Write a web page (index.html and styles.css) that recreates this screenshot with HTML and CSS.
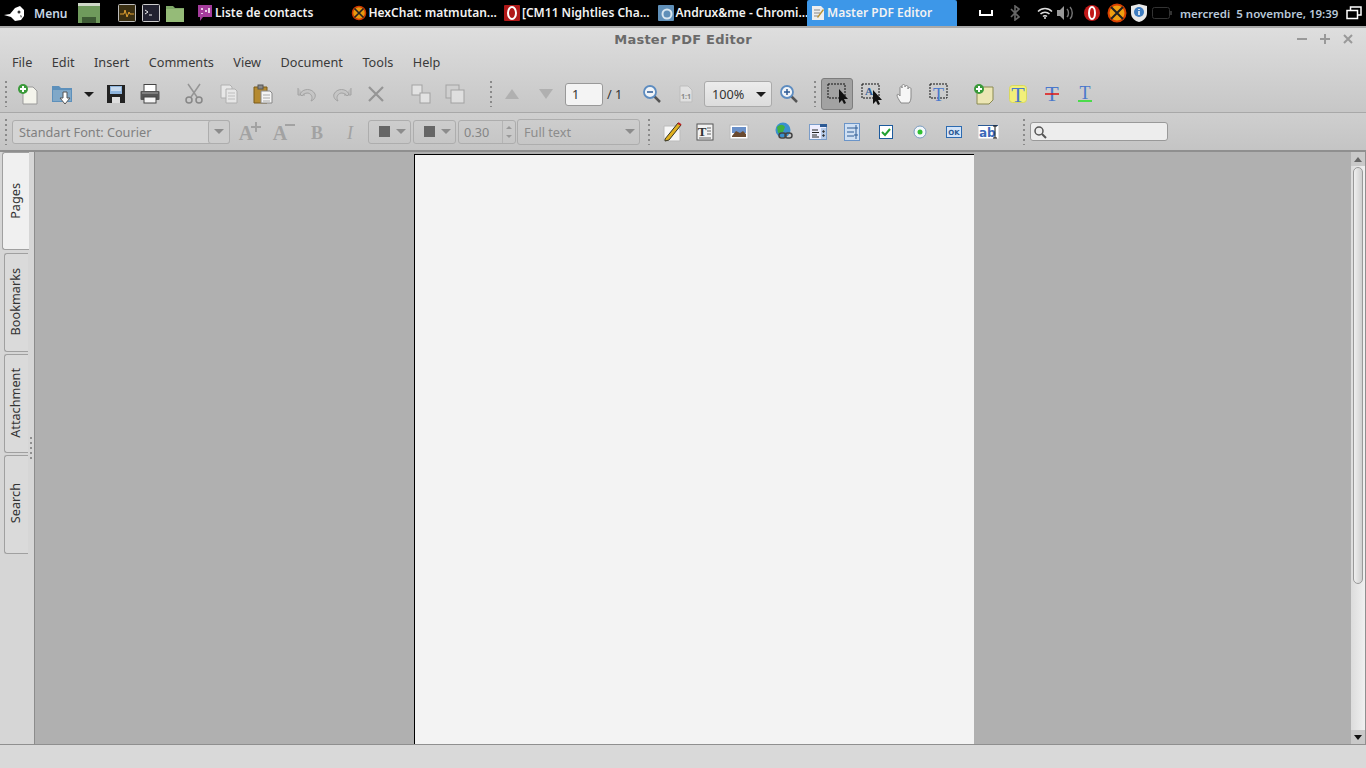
FILE: index.html
```html
<!DOCTYPE html>
<html lang="fr">
<head>
    <meta charset="UTF-8">
    <title>Master PDF Editor</title>
    <link rel="stylesheet" href="styles.css">
</head>
<body>
    <!-- desktop panel -->
    <div class="panel">
        <svg class="logo" width="24" height="22" viewBox="0 0 24 22"><path d="M2 13l6-1 5-6 5-2 4 4 0 6-3 4-6 1-4-4-7-2z" fill="#fff"/><circle cx="17" cy="10" r="1.5" fill="#333"/><path d="M18 13l2 1-1 2z" fill="#555"/></svg>
        <span class="menu-btn">Menu</span>
        <div class="launchers">
            <svg class="l-desk" width="22" height="20" viewBox="0 0 22 20"><rect width="22" height="3" fill="#cfd8c8"/><rect y="3" width="22" height="17" fill="#6f9a5c"/><rect x="4" y="14" width="14" height="6" fill="#3d5a34"/></svg>
            <svg class="l-mon" width="18" height="18" viewBox="0 0 18 18"><rect x=".5" y=".5" width="17" height="17" rx="1" fill="#3a2f12" stroke="#bbb"/><path d="M2 10h4l1-4 2 7 2-5 1 2h4" fill="none" stroke="#e0a030"/></svg>
            <svg class="l-term" width="18" height="18" viewBox="0 0 18 18"><rect x=".5" y=".5" width="17" height="17" rx="1" fill="#222230" stroke="#ccc"/><path d="M3 6l3 2-3 2M7 11h3" fill="none" stroke="#eee"/></svg>
            <svg class="l-fold" width="20" height="18" viewBox="0 0 20 18"><path d="M1 2h7l2 2h9v14H1z" fill="#7fa868"/><path d="M1 5h18v13H1z" fill="#95bb78"/></svg>
        </div>
        <div class="tasks">
            <div class="task">
                <svg width="16" height="18" viewBox="0 0 16 18"><path d="M1 1h14v12H6l-3 4v-4H1z" fill="#a43c9c"/><path d="M5 4v2M5 9v1M8 7h2M12 4v5" stroke="#fff" stroke-width="1.5"/></svg>
                <span>Liste de contacts</span>
            </div>
            <div class="task">
                <svg width="16" height="16" viewBox="0 0 16 16"><circle cx="8" cy="8" r="6.5" fill="#e89a10" stroke="#d03a00" stroke-width="1.5"/><path d="M3.5 3.5l9 9M12.5 3.5l-9 9" stroke="#222" stroke-width="1.6"/></svg>
                <span>HexChat: matmutan...</span>
            </div>
            <div class="task">
                <svg width="16" height="16" viewBox="0 0 16 16"><rect width="16" height="16" rx="1" fill="#b01818"/><ellipse cx="8" cy="8" rx="4" ry="6" fill="none" stroke="#fff" stroke-width="2"/></svg>
                <span>[CM11 Nightlies Cha...</span>
            </div>
            <div class="task">
                <svg width="16" height="16" viewBox="0 0 16 16"><rect width="16" height="16" rx="1" fill="#5f8fb8"/><circle cx="9" cy="9" r="4.5" fill="none" stroke="#d8e6f0" stroke-width="2"/></svg>
                <span>Andrux&amp;me - Chromi...</span>
            </div>
            <div class="task task-active">
                <svg width="14" height="16" viewBox="0 0 14 16"><path d="M1 1h9l3 3v11H1z" fill="#eee"/><path d="M3 5h6M3 8h6M3 11h4" stroke="#888"/><path d="M6 12l6-8 1 1-6 8z" fill="#b89030"/></svg>
                <span>Master PDF Editor</span>
            </div>
        </div>
        <div class="tray">
            <svg class="t-space" width="14" height="8" viewBox="0 0 14 8"><path d="M1 1v5h12V1" fill="none" stroke="#fff" stroke-width="2"/></svg>
            <svg class="t-bt" width="10" height="16" viewBox="0 0 10 16"><path d="M1 4l8 8-4 3V1l4 3-8 8" fill="none" stroke="#666" stroke-width="1.6"/></svg>
            <svg class="t-wifi" width="16" height="12" viewBox="0 0 16 12"><path d="M1 4.500c4-4 10-4 14 0M3.500 7c2.500-2.500 6.500-2.500 9 0M6 9.500c1-1 3-1 4 0" fill="none" stroke="#ddd" stroke-width="1.5"/><circle cx="8" cy="11" r="1" fill="#ddd"/></svg>
            <svg class="t-vol" width="16" height="14" viewBox="0 0 16 14"><path d="M0 4h3l4-4v14l-4-4H0z" fill="#999"/><path d="M10 3c2 2 2 6 0 8M13 1c3 3 3 9 0 12" fill="none" stroke="#777" stroke-width="1.4"/></svg>
            <svg class="t-op" width="16" height="16" viewBox="0 0 16 16"><circle cx="8" cy="8" r="8" fill="#c01818"/><ellipse cx="8" cy="8" rx="3" ry="6" fill="none" stroke="#fff" stroke-width="2"/></svg>
            <svg class="t-hex" width="20" height="20" viewBox="0 0 20 20"><circle cx="10" cy="10" r="8.500" fill="#f0a010" stroke="#d84000" stroke-width="2"/><path d="M4 4l12 12M16 4L4 16" stroke="#222" stroke-width="2"/></svg>
            <svg class="t-shield" width="18" height="20" viewBox="0 0 18 20"><path d="M9 1l8 2v7c0 5-4 8-8 9-4-1-8-4-8-9V3z" fill="#e8e8e8"/><circle cx="9" cy="9" r="5" fill="#3e7cc0"/><path d="M9 6v1M9 8v4" stroke="#fff" stroke-width="1.5"/></svg>
            <svg class="t-batt" width="20" height="12" viewBox="0 0 20 12"><rect x=".5" y=".5" width="17" height="11" rx="2" fill="none" stroke="#333"/><rect x="18" y="4" width="2" height="4" fill="#333"/></svg>
            <span class="clock">mercredi&nbsp; 5 novembre, 19:39</span>
            <svg class="t-win" width="16" height="14" viewBox="0 0 16 14"><rect x="4.500" y="1" width="10.500" height="8" fill="none" stroke="#fff" stroke-width="1.500"/><rect x="1" y="4.500" width="10.500" height="8" fill="#000" stroke="#fff" stroke-width="1.500"/></svg>
        </div>
    </div>

    <div class="window">
        <div class="titlebar">
            <span class="title">Master PDF Editor</span>
            <div class="win-btns">
                <svg width="10" height="10" viewBox="0 0 10 10"><path d="M0 5h10" stroke="#999" stroke-width="2"/></svg>
                <svg width="10" height="10" viewBox="0 0 10 10"><path d="M0 5h10M5 0v10" stroke="#999" stroke-width="2"/></svg>
                <svg width="10" height="10" viewBox="0 0 10 10"><path d="M1 1l8 8M9 1l-8 8" stroke="#999" stroke-width="2"/></svg>
            </div>
        </div>

        <div class="menubar">
            <span>File</span><span>Edit</span><span>Insert</span><span>Comments</span><span>View</span><span>Document</span><span>Tools</span><span>Help</span>
        </div>

        <div class="toolbar tb1">
            <i class="grip"></i>
            <div class="tool"><svg width="24" height="24" viewBox="0 0 24 24"><path d="M7 5h10l4 4v13H7z" fill="#f4f4ec" stroke="#999"/><circle cx="7" cy="7" r="5" fill="#3a9a3a"/><path d="M7 4v6M4 7h6" stroke="#fff" stroke-width="2"/></svg></div>
            <div class="tool"><svg width="24" height="24" viewBox="0 0 24 24"><path d="M2 6V4h7l2 2h11v14H2z" fill="#5d90bb"/><path d="M3 8h18v11H3z" fill="#80a8c8"/><path d="M13 10h4v6h3l-5 6-5-6h3z" fill="#fff" stroke="#555"/></svg></div>
            <div class="tool tool-arrow"><i class="caret"></i></div>
            <div class="tool"><svg width="20" height="20" viewBox="0 0 20 20"><path d="M1 1h18v18H1z" fill="#222"/><rect x="4" y="2" width="12" height="8" fill="#8eb4dc"/><path d="M5 4h10M5 6h10" stroke="#fff"/><rect x="6" y="13" width="8" height="6" fill="#ddd"/></svg></div>
            <div class="tool"><svg width="22" height="22" viewBox="0 0 22 22"><rect x="5" y="1.500" width="12" height="7" fill="#fff" stroke="#444"/><rect x="1.500" y="8" width="19" height="9" rx="1" fill="#555"/><rect x="5" y="14" width="12" height="6" fill="#f4f4f4" stroke="#444"/><path d="M3 10h16" stroke="#aaa"/></svg></div>

            <div class="tool gap10 off"><svg width="20" height="22" viewBox="0 0 20 22"><path d="M4 1l9 13M16 1L7 14" stroke="#888" stroke-width="1.500"/><circle cx="5" cy="17" r="3" fill="none" stroke="#777" stroke-width="1.500"/><circle cx="15" cy="17" r="3" fill="none" stroke="#777" stroke-width="1.500"/></svg></div>
            <div class="tool gap1 off"><svg width="20" height="20" viewBox="0 0 20 20"><path d="M2 1h9l2 2v11H2z" fill="#eee" stroke="#aaa"/><path d="M7 5h9l2 2v12H7z" fill="#eee" stroke="#aaa"/><path d="M9 9h7M9 12h7M9 15h7" stroke="#bbb"/></svg></div>
            <div class="tool"><svg width="20" height="20" viewBox="0 0 20 20"><path d="M1 3h13v16H1z" fill="#b58a30" stroke="#7a5a18"/><rect x="5" y="1" width="5" height="4" fill="#888" stroke="#555"/><path d="M8 7h9l2 2v10H8z" fill="#f4f4f4" stroke="#888"/><path d="M10 11h7M10 14h7M10 17h7" stroke="#aaa"/></svg></div>

            <div class="tool gap10 off"><svg width="20" height="16" viewBox="0 0 20 16"><path d="M1 2v7h7" fill="#bbb" stroke="#999"/><path d="M3 8c3-6 12-6 15 0 1 3-1 6-4 7 2-3 1-7-3-8-3 0-5 1-6 3z" fill="#c4c4c4" stroke="#999"/></svg></div>
            <div class="tool gap1 off"><svg width="20" height="16" viewBox="0 0 20 16"><path d="M19 2v7h-7" fill="#bbb" stroke="#999"/><path d="M17 8C14 2 5 2 2 8c-1 3 1 6 4 7-2-3-1-7 3-8 3 0 5 1 6 3z" fill="#c4c4c4" stroke="#999"/></svg></div>
            <div class="tool tool-n off"><svg width="16" height="16" viewBox="0 0 16 16"><path d="M1 1l14 14M15 1L1 15" stroke="#888" stroke-width="2.200"/></svg></div>

            <div class="tool gap12 off"><svg width="20" height="20" viewBox="0 0 20 20"><rect x="1" y="1" width="10" height="10" fill="#e8e8e8" stroke="#999"/><rect x="9" y="9" width="10" height="10" fill="#e8e8e8" stroke="#999"/></svg></div>
            <div class="tool off"><svg width="20" height="20" viewBox="0 0 20 20"><rect x="1" y="1" width="13" height="13" fill="#d0d0d0" stroke="#999"/><rect x="6" y="6" width="13" height="13" fill="#e4e4e4" stroke="#999"/></svg></div>

            <i class="grip grip-m"></i>
            <div class="tool off"><svg width="16" height="12" viewBox="0 0 16 12"><path d="M8 1l7 10H1z" fill="#aaa"/></svg></div>
            <div class="tool off"><svg width="16" height="12" viewBox="0 0 16 12"><path d="M8 11l7-10H1z" fill="#aaa"/></svg></div>
            <div class="page-input">1</div>
            <span class="page-total">/ 1</span>
            <div class="tool gap12"><svg width="20" height="20" viewBox="0 0 20 20"><path d="M12 12l6 6" stroke="#555" stroke-width="2.500"/><circle cx="8" cy="8" r="6" fill="#f0f4f8" stroke="#5d8cc0" stroke-width="1.800"/><path d="M5 8h6" stroke="#2c5a94" stroke-width="1.500"/></svg></div>
            <div class="tool tool-fit off"><svg width="16" height="18" viewBox="0 0 16 18"><path d="M2 1h8l4 4v12H2z" fill="#e6e6e6" stroke="#bbb"/><text x="8" y="14" class="ico-small">1:1</text></svg></div>
            <div class="zoom-box"><span>100%</span><i class="caret"></i></div>
            <div class="tool tool-z"><svg width="20" height="20" viewBox="0 0 20 20"><path d="M12 12l6 6" stroke="#555" stroke-width="2.500"/><circle cx="8" cy="8" r="6" fill="#f0f4f8" stroke="#5d8cc0" stroke-width="1.800"/><path d="M5 8h6M8 5v6" stroke="#2c5a94" stroke-width="1.500"/></svg></div>

            <i class="grip grip-r"></i>
            <div class="tool tool-on"><svg width="24" height="24" viewBox="0 0 24 24"><rect x="3" y="2" width="17" height="14" fill="none" stroke="#111" stroke-dasharray="2 1"/><path d="M14 7v14l3-3 2 4 2-1-2-4h4z" fill="#111"/></svg></div>
            <div class="tool"><svg width="24" height="24" viewBox="0 0 24 24"><rect x="4" y="2" width="17" height="14" fill="none" stroke="#111" stroke-dasharray="2 1"/><text x="11" y="13" class="ico-a">A</text><path d="M15 8v14l3-3 2 4 2-1-2-4h4z" fill="#111"/></svg></div>
            <div class="tool tool-hand"><svg width="18" height="20" viewBox="0 0 18 20"><path d="M5 19c-2-3-4-6-4-8 0-1 2-1 3 1V4c0-2 2-2 2 0V2c0-2 3-2 3 0v1c0-2 3-2 3 0v2c0-2 3-2 3 0v8c0 3-1 5-2 6z" fill="#f6f6f6" stroke="#888"/></svg></div>
            <div class="tool tool-tsel"><svg width="22" height="26" viewBox="0 0 22 26"><rect x="2" y="3" width="17" height="14" fill="none" stroke="#111" stroke-dasharray="2 1"/><text x="10.500" y="20" class="ico-t18">T</text></svg></div>

            <div class="tool gap11"><svg width="22" height="22" viewBox="0 0 22 22"><path d="M4 4h16v13l-4 4H4z" fill="#ece6b4" stroke="#8a8a50"/><circle cx="6" cy="6" r="5" fill="#3a9a3a"/><path d="M6 3v6M3 6h6" stroke="#fff" stroke-width="2"/></svg></div>
            <div class="tool"><svg width="22" height="26" viewBox="0 0 22 26"><rect x="2.500" y="4.500" width="17" height="17" rx="3" fill="#f2f07a" stroke="#d8d860"/><text x="11" y="21" class="ico-t">T</text></svg></div>
            <div class="tool tool-n"><svg width="22" height="26" viewBox="0 0 22 26"><text x="11" y="20" class="ico-t">T</text><path d="M4 13h14" stroke="#e01010" stroke-width="1.500"/></svg></div>
            <div class="tool"><svg width="22" height="26" viewBox="0 0 22 26"><text x="11" y="18" class="ico-t18">T</text><path d="M4 20h14" stroke="#20e020" stroke-width="1.500"/></svg></div>
        </div>

        <div class="toolbar tb2">
            <i class="grip"></i>
            <div class="font-box"><span>Standart Font: Courier</span><div class="font-arrow"><i class="caret caret-off"></i></div></div>
            <div class="tool tb2-first off"><svg width="24" height="24" viewBox="0 0 24 24"><text x="9" y="20" class="ico-big">A</text><path d="M19 2v10M14 7h10" stroke="#999" stroke-width="2"/></svg></div>
            <div class="tool off"><svg width="24" height="24" viewBox="0 0 24 24"><text x="9" y="20" class="ico-big">A</text><path d="M14 5h10" stroke="#999" stroke-width="2"/></svg></div>
            <div class="tool tool-n off"><svg width="18" height="24" viewBox="0 0 18 24"><text x="9" y="19" class="ico-b">B</text></svg></div>
            <div class="tool tool-n off"><svg width="18" height="24" viewBox="0 0 18 24"><text x="9" y="19" class="ico-i">I</text></svg></div>
            <div class="color-btn"><b></b><i class="caret caret-off"></i></div>
            <div class="color-btn"><b></b><i class="caret caret-off"></i></div>
            <div class="spin"><span>0.30</span><div class="spin-arrows"><i class="up"></i><i class="down"></i></div></div>
            <div class="type-box"><span>Full text</span><i class="caret caret-off"></i></div>
            <i class="grip grip-t"></i>
            <div class="tool tool-s"><svg width="20" height="22" viewBox="0 0 20 22"><path d="M2 5h12l4 4v11H2z" fill="#f6f6f6" stroke="#bbb"/><path d="M3 18L16 2l3 2-12 15-4 1z" fill="#e0b020" stroke="#332"/><path d="M16 2l3 2" stroke="#c02020" stroke-width="2"/></svg></div>
            <div class="tool"><svg width="20" height="20" viewBox="0 0 20 20"><rect x="2" y="2" width="16" height="16" fill="#f2f2f2" stroke="#555"/><text x="7" y="14" class="ico-tb">T</text><path d="M12 6h4M12 9h4M12 12h4M4 16h12" stroke="#666"/></svg></div>
            <div class="tool"><svg width="20" height="16" viewBox="0 0 20 16"><rect x="1" y="1" width="18" height="14" fill="#fff" stroke="#bbb"/><rect x="3" y="3" width="14" height="6" fill="#6a90c8"/><path d="M3 12l4-5 4 2 3-2 3 3v3H3z" fill="#6a4a30"/></svg></div>
            <div class="tool gap11"><svg width="20" height="20" viewBox="0 0 20 20"><circle cx="9" cy="8" r="7.500" fill="#3a90d0"/><path d="M3 5c3-3 6-3 8 0l-2 5-5 1z" fill="#40b040"/><rect x="5" y="11" width="7" height="5" rx="2.500" fill="none" stroke="#444" stroke-width="1.500"/><rect x="11" y="11" width="7" height="5" rx="2.500" fill="none" stroke="#444" stroke-width="1.500"/></svg></div>
            <div class="tool"><svg width="18" height="16" viewBox="0 0 18 16"><rect x=".5" y=".5" width="17" height="15" fill="#eef" stroke="#7a9cc8"/><rect x="11" y="0" width="7" height="3" fill="#2c5a94"/><path d="M3 6h6M3 8.500h7M3 11h5M3 13h7" stroke="#222"/><rect x="12" y="4" width="5" height="11" fill="#b8cce8"/><path d="M14.500 6l1.500 1.500-1.500 1.500-1.500-1.500zM14.500 10l1.500 1.500-1.500 1.500-1.500-1.500z" fill="#333"/></svg></div>
            <div class="tool"><svg width="16" height="18" viewBox="0 0 16 18"><rect x=".5" y=".5" width="15" height="17" fill="#cfdff2" stroke="#6a94c8"/><path d="M3 5h7M3 9h7M3 13h7M12 2v14M10 5h4M10 12h4" stroke="#2c5a94"/></svg></div>
            <div class="tool"><svg width="14" height="14" viewBox="0 0 14 14"><rect x=".5" y=".5" width="13" height="13" fill="#fff" stroke="#1c5a9c"/><path d="M3 7l3 3 5-6" fill="none" stroke="#20a030" stroke-width="2"/></svg></div>
            <div class="tool"><svg width="14" height="14" viewBox="0 0 14 14"><circle cx="7" cy="7" r="6" fill="#f4f8fc" stroke="#7a9cc0"/><circle cx="7" cy="7" r="2.500" fill="#30c030"/></svg></div>
            <div class="tool"><svg width="16" height="12" viewBox="0 0 16 12"><rect x=".5" y=".5" width="15" height="11" fill="#d4e4f8" stroke="#2c6ab0"/><text x="8" y="9" class="ico-ok">OK</text></svg></div>
            <div class="tool tool-last"><svg width="22" height="14" viewBox="0 0 22 14"><rect x=".5" y=".5" width="20" height="13" fill="#fff"/><path d="M0 .5h20" stroke="#2c5a94"/><text x="1" y="12" class="ico-ab">ab</text><path d="M15 1h4M17 1v12M15 13h4" stroke="#111"/></svg></div>
            <i class="grip grip-s"></i>
            <div class="search">
                <svg width="14" height="14" viewBox="0 0 14 14"><circle cx="6" cy="6" r="4" fill="none" stroke="#555" stroke-width="1.500"/><path d="M9 9l4 4" stroke="#555" stroke-width="2"/></svg>
            </div>
        </div>

        <div class="content">
            <div class="sidebar">
                <div class="tab tab-on"><span>Pages</span></div>
                <div class="tab"><span>Bookmarks</span></div>
                <div class="tab"><span>Attachment</span></div>
                <div class="tab"><span>Search</span></div>
                <i class="splitter"></i>
            </div>
            <div class="canvas">
                <div class="page"></div>
            </div>
            <div class="scrollbar">
                <div class="sb-btn"><i class="sb-up"></i></div>
                <div class="sb-track"><div class="sb-thumb"></div></div>
                <div class="sb-btn"><i class="sb-down"></i></div>
            </div>
        </div>

        <div class="statusbar"></div>
    </div>
</body>
</html>
```

FILE: styles.css
```css
* {
    box-sizing: border-box;
}
html, body {
    height: 100%;
}
body {
    margin: 0;
    height: 768px;
    overflow: hidden;
    display: flex;
    flex-direction: column;
    font-family: "Noto Sans", sans-serif;
    font-size: 12.7px;
    color: #333;
    background: #d8d8d8;
}
svg {
    display: block;
    flex: none;
}
i {
    display: block;
    font-style: normal;
}

/* panel */
.panel {
    height: 26px;
    flex: none;
    background: #000;
    display: flex;
    align-items: center;
    color: #f2f2f2;
    font-weight: 600;
    font-size: 12px;
}
.logo {
    margin-left: 2px;
}
.menu-btn {
    margin-left: 8px;
    width: 44px;
    color: #c6d6e6;
}
.launchers {
    display: flex;
    align-items: center;
}
.l-mon {
    margin-left: 18px;
}
.l-term {
    margin-left: 6px;
}
.l-fold {
    margin-left: 5px;
}
.tasks {
    display: flex;
    height: 26px;
    margin-left: 12px;
}
.task {
    width: 153.5px;
    display: flex;
    align-items: center;
    gap: 2px;
    padding-bottom: 1px;
    white-space: nowrap;
}
.task-active {
    width: 150px;
    padding-left: 4px;
    margin-left: -4px;
    gap: 2px;
    background: #3d97e8;
    border-radius: 2px 2px 0 0;
}
.tray {
    display: flex;
    align-items: center;
}
.t-space {
    margin-left: 22px;
}
.t-bt {
    margin-left: 17px;
}
.t-wifi {
    margin-left: 17px;
}
.t-vol {
    margin-left: 4px;
}
.t-op {
    margin-left: 11px;
}
.t-hex {
    margin-left: 7px;
}
.t-shield {
    margin-left: 3px;
}
.t-batt {
    margin-left: 4px;
}
.clock {
    margin-left: 8px;
    font-size: 11.5px;
    color: #b8c8d8;
    white-space: nowrap;
}
.t-win {
    margin-left: 8px;
}

/* window chrome */
.window {
    flex: 1;
    display: flex;
    flex-direction: column;
    min-height: 0;
    border-top: 2px solid #a9a9a9;
    background: linear-gradient(#dedede, #c6c6c6 86px);
}
.titlebar {
    height: 22px;
    flex: none;
    position: relative;
    text-align: center;
    font-family: "DejaVu Sans", sans-serif;
    font-weight: bold;
    font-size: 13px;
    letter-spacing: 0.25px;
    line-height: 23px;
    color: #6a6a6a;
}
.win-btns {
    position: absolute;
    top: 6px;
    right: 13px;
    display: flex;
    gap: 13px;
}
.menubar {
    height: 24px;
    flex: none;
    display: flex;
    gap: 19.5px;
    padding-left: 12px;
    align-items: center;
    color: #3a3a3a;
}
.toolbar {
    flex: none;
    display: flex;
    align-items: center;
    padding-left: 5px;
}
.tb1 {
    height: 39px;
    padding-top: 2px;
    border-bottom: 1px solid #a8a8a8;
}
.tb2 {
    height: 39px;
    background: linear-gradient(#cfcfcf, #c4c4c4);
    border-bottom: 2px solid #8f8f8f;
}
.grip {
    width: 2px;
    height: 26px;
    flex: none;
    background: repeating-linear-gradient(#8a8a8a 0 2px, transparent 2px 5px);
}
.tool {
    width: 34px;
    height: 30px;
    flex: none;
    display: flex;
    align-items: center;
    justify-content: center;
}
.tb1 > .grip:first-child {
    margin-right: 4px;
}
.tool-n {
    width: 33px;
}
.tool-arrow {
    width: 20px;
}
.off svg {
    opacity: 0.8;
}
.gap10 {
    margin-left: 10px;
}
.gap1 {
    margin-left: 1px;
}
.gap11 {
    margin-left: 11px;
}
.gap12 {
    margin-left: 12px;
}
.caret {
    width: 0;
    height: 0;
    flex: none;
    border-left: 5px solid transparent;
    border-right: 5px solid transparent;
    border-top: 5px solid #1c1c1c;
}
.caret-off {
    border-top-color: #8c8c8c;
}
.grip-m {
    margin: 0 3px 0 18px;
}
.page-input {
    width: 38px;
    height: 23px;
    margin-left: 2px;
    padding-left: 6px;
    line-height: 21px;
    background: #f4f4f4;
    border: 1px solid #999;
    border-radius: 3px;
}
.page-total {
    margin-left: 4px;
    width: 16px;
    white-space: nowrap;
}
.tool-fit {
    margin-right: 1px;
}
.tool-hand {
    margin-left: 1px;
}
.zoom-box {
    width: 68px;
    height: 26px;
    display: flex;
    align-items: center;
    justify-content: space-between;
    padding: 0 5px 0 7px;
    background: linear-gradient(#ececec, #dcdcdc);
    border: 1px solid #aaa;
    border-radius: 3px;
}
.grip-r {
    margin: 0 5px 0 8px;
}
.tool-on {
    width: 32px;
    height: 32px;
    background: #a2a2a2;
    border: 1px solid #7d7d7d;
    border-radius: 3px;
}
.ico-small {
    font-size: 7px;
    font-weight: bold;
    text-anchor: middle;
    fill: #777;
}
.ico-a {
    font-family: "Liberation Serif", serif;
    font-size: 11px;
    font-weight: bold;
    text-anchor: middle;
    fill: #2c5a94;
}
.ico-t {
    font-family: "Liberation Serif", serif;
    font-size: 22px;
    text-anchor: middle;
    fill: #4a78cc;
}
.ico-t18 {
    font-family: "Liberation Serif", serif;
    font-size: 18px;
    text-anchor: middle;
    fill: #4a78cc;
}
.ico-big {
    font-family: "Liberation Serif", serif;
    font-size: 20px;
    font-weight: bold;
    text-anchor: middle;
    fill: #999;
}
.ico-b {
    font-family: "Liberation Serif", serif;
    font-size: 18px;
    font-weight: bold;
    text-anchor: middle;
    fill: #999;
}
.ico-i {
    font-family: "Liberation Serif", serif;
    font-size: 18px;
    font-style: italic;
    text-anchor: middle;
    fill: #999;
}
.ico-tb {
    font-family: "Liberation Serif", serif;
    font-size: 13px;
    font-weight: bold;
    text-anchor: middle;
    fill: #333;
}
.ico-ok {
    font-family: "DejaVu Sans", sans-serif;
    font-size: 7px;
    font-weight: bold;
    text-anchor: middle;
    fill: #2c5a94;
}
.ico-ab {
    font-family: "DejaVu Sans", sans-serif;
    font-size: 12px;
    font-weight: bold;
    fill: #3a68b8;
}

/* second toolbar */
.font-box {
    width: 218px;
    height: 24px;
    margin-left: 5px;
    flex: none;
    display: flex;
    justify-content: space-between;
    align-items: center;
    padding-left: 6px;
    color: #808080;
    border: 1px solid #adadad;
    border-radius: 3px;
    background: #d4d4d4;
}
.font-arrow {
    width: 22px;
    height: 24px;
    display: flex;
    align-items: center;
    justify-content: center;
    border: 1px solid #adadad;
    border-radius: 3px;
    margin-right: -1px;
    background: #cdcdcd;
}
.tb2-first {
    margin-left: 2px;
}
.color-btn {
    width: 43px;
    height: 24px;
    flex: none;
    margin-left: 2px;
    display: flex;
    align-items: center;
    gap: 6px;
    padding-left: 10px;
    border: 1px solid #adadad;
    border-radius: 3px;
}
.color-btn b {
    width: 11px;
    height: 11px;
    background: #666;
}
.spin {
    width: 58px;
    height: 24px;
    flex: none;
    margin-left: 2px;
    display: flex;
    align-items: center;
    justify-content: space-between;
    padding-left: 5px;
    color: #858585;
    border: 1px solid #adadad;
    border-radius: 3px;
}
.spin-arrows {
    width: 13px;
    height: 22px;
    border-left: 1px solid #b4b4b4;
    display: flex;
    flex-direction: column;
    align-items: center;
    justify-content: center;
    gap: 6px;
}
.up, .down {
    width: 0;
    height: 0;
    border-left: 3px solid transparent;
    border-right: 3px solid transparent;
}
.up {
    border-bottom: 3px solid #999;
}
.down {
    border-top: 3px solid #999;
}
.type-box {
    width: 123px;
    height: 26px;
    flex: none;
    margin-left: 1px;
    display: flex;
    align-items: center;
    justify-content: space-between;
    padding: 0 4px 0 6px;
    color: #8c8c8c;
    border: 1px solid #adadad;
    border-radius: 3px;
}
.grip-t {
    margin-left: 8px;
}
.tool-s {
    width: 33px;
    margin-left: 5px;
}
.tool-last {
    margin-left: 1px;
}
.grip-s {
    margin-left: 17px;
}
.search {
    width: 138px;
    height: 19px;
    margin-left: 5px;
    flex: none;
    display: flex;
    align-items: center;
    padding-left: 2px;
    background: #ededed;
    border: 1px solid #999;
    border-radius: 3px;
}

/* main area */
.content {
    flex: 1;
    min-height: 0;
    display: flex;
}
.sidebar {
    width: 35px;
    flex: none;
    position: relative;
    background: #d6d6d6;
    border-right: 1px solid #8c8c8c;
}
.tab {
    width: 24px;
    height: 99px;
    margin: 0 0 2px 4px;
    display: flex;
    align-items: center;
    justify-content: center;
    padding-right: 2px;
    padding-bottom: 2px;
    background: #dadada;
    border: 1px solid #a0a0a0;
    border-right: 0;
    border-radius: 3px 0 0 3px;
    color: #333;
}
.tab span {
    writing-mode: vertical-rl;
    transform: rotate(180deg);
    white-space: nowrap;
    line-height: 1;
}
.tab-on {
    width: 27px;
    margin-left: 2px;
    background: #f0f0f0;
    height: 98px;
    padding-bottom: 0;
    margin-bottom: 3px;
}
.splitter {
    position: absolute;
    left: 30px;
    top: 285px;
    width: 2px;
    height: 24px;
    background: repeating-linear-gradient(#8f8f8f 0 2px, transparent 2px 5px);
}
.canvas {
    flex: 1;
    min-width: 0;
    padding: 2px 0 0 379px;
    background: #b0b0b0;
    overflow: hidden;
}
.page {
    width: 560px;
    height: 800px;
    background: #f3f3f3;
    border-top: 1px solid #000;
    border-left: 1px solid #000;
}
.scrollbar {
    width: 15px;
    flex: none;
    display: flex;
    flex-direction: column;
    background: linear-gradient(90deg, #dcdcdc, #f0f0f0);
    border-right: 1px solid #909090;
}
.sb-btn {
    height: 14px;
    flex: none;
    display: flex;
    align-items: center;
    justify-content: center;
    background: #c9c9c9;
}
.sb-up, .sb-down {
    width: 0;
    height: 0;
    border-left: 4px solid transparent;
    border-right: 4px solid transparent;
}
.sb-up {
    border-bottom: 5px solid #666;
}
.sb-down {
    border-top: 5px solid #111;
}
.sb-track {
    flex: 1;
    padding: 1px 2px 0 2px;
}
.sb-thumb {
    height: 417px;
    background: linear-gradient(90deg, #efefef, #cfcfcf);
    border: 1px solid #999;
    border-radius: 5px;
}
.statusbar {
    height: 24px;
    flex: none;
    background: #d9d9d9;
    border-top: 1px solid #8f8f8f;
}
```
